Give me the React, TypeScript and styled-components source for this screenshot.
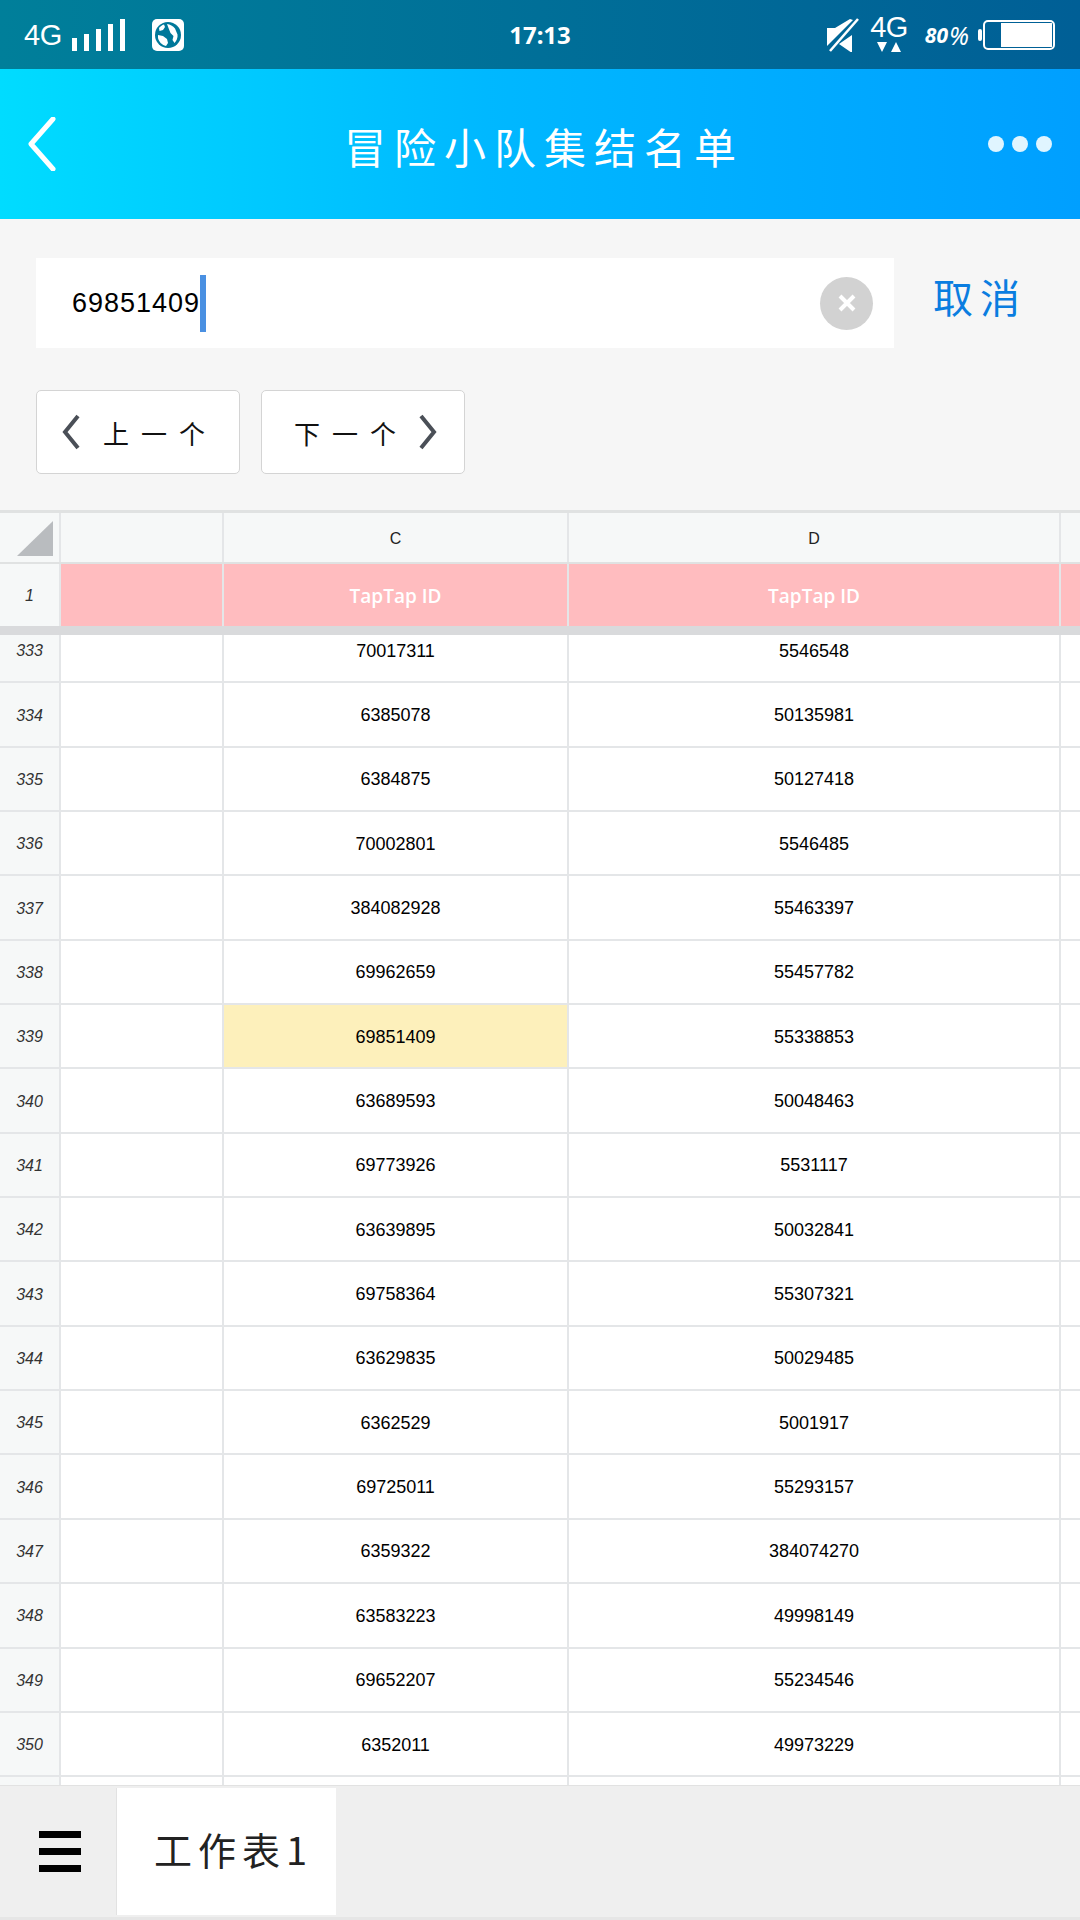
import styled, { createGlobalStyle } from "styled-components";

const GlobalStyle = createGlobalStyle`
    html, body {
        margin: 0;
        padding: 0;
        background: #ffffff;
    }
    * {
        box-sizing: border-box;
    }
`;

const rows = [
    ["333", "70017311", "5546548"],
    ["334", "6385078", "50135981"],
    ["335", "6384875", "50127418"],
    ["336", "70002801", "5546485"],
    ["337", "384082928", "55463397"],
    ["338", "69962659", "55457782"],
    ["339", "69851409", "55338853"],
    ["340", "63689593", "50048463"],
    ["341", "69773926", "5531117"],
    ["342", "63639895", "50032841"],
    ["343", "69758364", "55307321"],
    ["344", "63629835", "50029485"],
    ["345", "6362529", "5001917"],
    ["346", "69725011", "55293157"],
    ["347", "6359322", "384074270"],
    ["348", "63583223", "49998149"],
    ["349", "69652207", "55234546"],
    ["350", "6352011", "49973229"],
    ["", "", ""],
];

const Page = styled.div`
    width: 1080px;
    height: 1920px;
    display: flex;
    flex-direction: column;
    overflow: hidden;
    font-family: "Liberation Sans", "Noto Sans CJK SC", sans-serif;
`;

const StatusBar = styled.div`
    height: 69px;
    flex: none;
    padding: 0 24px;
    display: grid;
    grid-template-columns: 1fr auto 1fr;
    align-items: center;
    color: #ffffff;
    background: linear-gradient(90deg, #007f9a 0%, #006f98 50%, #005f96 100%);
`;

const StatusGroup = styled.div<{ $right?: boolean }>`
    display: flex;
    align-items: center;
    justify-content: ${(p) => (p.$right ? "flex-end" : "flex-start")};
`;

const NetLabel = styled.span`
    font-size: 29px;
    line-height: 24px;
    letter-spacing: -0.5px;
`;

const NetStack = styled.div`
    display: flex;
    flex-direction: column;
    align-items: center;
    gap: 3px;
    margin: -2px 17px 0 11px;
`;

const Clock = styled.span`
    font-family: "Noto Sans", sans-serif;
    font-size: 24px;
    font-weight: 700;
`;

const Percent = styled.span`
    font-family: "Noto Sans", sans-serif;
    font-size: 21px;
    font-weight: 700;
    font-style: italic;
    margin-right: 9px;
    display: flex;
    align-items: center;
`;

const PercentSign = styled.span`
    font-size: 25px;
    font-weight: 400;
    margin-left: 1px;
`;

const NavBar = styled.div`
    height: 150px;
    flex: none;
    padding: 0 28px;
    display: grid;
    grid-template-columns: 1fr auto 1fr;
    align-items: center;
    color: #ffffff;
    background: linear-gradient(90deg, #00dcff 0%, #00b8ff 45%, #009fff 100%);
`;

const Title = styled.h1`
    margin: 4px -8px 0 0;
    font-family: "Noto Sans CJK SC", sans-serif;
    font-size: 42px;
    font-weight: 400;
    letter-spacing: 8px;
    line-height: 50px;
`;

const Dots = styled.div`
    display: flex;
    justify-content: flex-end;
    gap: 8px;
`;

const Dot = styled.span`
    width: 16px;
    height: 16px;
    border-radius: 50%;
    background: #e0f5ff;
`;

const SearchArea = styled.div`
    height: 291px;
    flex: none;
    padding: 39px 36px 0;
    background: #f6f6f6;
`;

const SearchRow = styled.div`
    display: flex;
    align-items: center;
`;

const SearchBox = styled.div`
    width: 858px;
    height: 90px;
    padding: 0 21px 0 36px;
    display: flex;
    align-items: center;
    background: #ffffff;
`;

const SearchText = styled.span`
    font-size: 27px;
    letter-spacing: 1px;
    color: #000000;
`;

const Caret = styled.span`
    width: 6px;
    height: 57px;
    background: #4a90e2;
`;

const ClearButton = styled.div`
    width: 53px;
    height: 53px;
    margin-left: auto;
    border-radius: 50%;
    background: #d2d2d2;
    display: flex;
    align-items: center;
    justify-content: center;
`;

const CancelLabel = styled.span`
    margin: 0 0 14px 39px;
    font-family: "Noto Sans CJK SC", sans-serif;
    font-size: 40px;
    letter-spacing: 7px;
    line-height: 48px;
    color: #0a7de0;
`;

const StepRow = styled.div`
    display: flex;
    gap: 21px;
    margin-top: 42px;
`;

const StepButton = styled.div<{ $next?: boolean }>`
    width: 204px;
    height: 84px;
    padding: ${(p) => (p.$next ? "0 27px 0 32px" : "0 34px 0 25px")};
    display: flex;
    align-items: center;
    justify-content: space-between;
    background: #ffffff;
    border: 1px solid #d4d4d4;
    border-radius: 5px;
    font-family: "Noto Sans CJK SC", sans-serif;
    font-size: 26px;
    color: #111111;
`;

const StepLabel = styled.span`
    letter-spacing: 12px;
    margin-right: -12px;
`;

const Sheet = styled.div`
    flex: 1;
    min-height: 0;
    display: flex;
    flex-direction: column;
    border-top: 3px solid #e0e2e2;
    background: #ffffff;
`;

const Row = styled.div<{ $h: string; $line: string; $lineW: number }>`
    height: ${(p) => p.$h};
    flex: none;
    display: grid;
    grid-template-columns: 61px 163px 345px 492px 19px;
    border-bottom: ${(p) => p.$lineW}px solid ${(p) => p.$line};
`;

const Cell = styled.div<{ $bg?: string; $color?: string }>`
    padding-top: 2px;
    display: flex;
    align-items: center;
    justify-content: center;
    border-right: 2px solid #e4e6e8;
    background: ${(p) => p.$bg || "#ffffff"};
    color: ${(p) => p.$color || "#000000"};
    font-size: 18px;

    &:last-child {
        border-right: 0;
    }
`;

const RowNum = styled(Cell)`
    background: #f6f8f8;
    color: #333333;
    font-size: 16px;
    font-style: italic;
`;

const ColLetter = styled(Cell)`
    background: #f6f8f8;
    color: #222222;
    font-size: 16px;
`;

const HeaderCell = styled(Cell)`
    background: #ffbcbf;
    color: #ffffff;
    font-family: "Open Sans", sans-serif;
    font-size: 19px;
    font-weight: 600;
`;

const Corner = styled(RowNum)`
    padding: 8px 6px 6px 17px;
`;

const Viewport = styled.div`
    flex: 1;
    min-height: 0;
    overflow: hidden;
`;

const Scrolled = styled.div`
    margin-top: -16px;
`;

const Toolbar = styled.div`
    height: 135px;
    flex: none;
    display: flex;
    align-items: flex-start;
    padding-top: 2px;
    background: #efefef;
    border-top: 1px solid #e2e2e2;
    border-bottom: 3px solid #e6e6e6;
`;

const MenuButton = styled.div`
    width: 116px;
    height: 127px;
    padding-left: 39px;
    display: flex;
    flex-direction: column;
    justify-content: center;
    gap: 10px;
`;

const MenuBar = styled.span`
    width: 42px;
    height: 7px;
    background: #000000;
`;

const Tab = styled.div`
    width: 220px;
    height: 127px;
    padding: 0 0 6px 37px;
    display: flex;
    align-items: center;
    background: #ffffff;
    border-left: 1px solid #e2e2e2;
    font-family: "Noto Sans CJK SC", sans-serif;
    font-size: 38px;
    letter-spacing: 6px;
    color: #222222;
`;

const App = () => {
    return (
        <Page>
            <GlobalStyle />

            <StatusBar>
                <StatusGroup>
                    <NetLabel>4G</NetLabel>
                    <svg width="56" height="34" viewBox="0 0 56 34" style={{ marginLeft: 7 }}>
                        <g fill="#ffffff">
                            <rect x="3" y="20" width="5" height="13" />
                            <rect x="15" y="16" width="5" height="17" />
                            <rect x="27" y="11" width="5" height="22" />
                            <rect x="39" y="6" width="5" height="27" />
                            <rect x="51" y="1" width="5" height="32" />
                        </g>
                    </svg>
                    <svg width="32" height="32" viewBox="0 0 32 32" style={{ marginLeft: 27 }}>
                        <rect width="32" height="32" rx="5" fill="#ffffff" />
                        <circle cx="16" cy="16" r="13" fill="#00789a" />
                        <path
                            d="M7 9c1-1.500 3-3 5-3.500l1 2.500-2 3-3.500 1zM15 5c3 .5 6 2 8 4.500l2.500 6c.5 3-1 6.500-3 8.500l-2-3 1-4-3-3-2-5zM6 16l5 1 4 3 1 4-2 3c-4-1-7-4-8-8z"
                            fill="#ffffff"
                        />
                    </svg>
                </StatusGroup>

                <Clock>17:13</Clock>

                <StatusGroup $right>
                    <svg width="33" height="34" viewBox="0 0 33 34">
                        <path d="M1 10h8L24 1l3 1L1 28zM26 17v18L13 26z" fill="#ffffff" />
                        <path d="M4 33 32 1" stroke="#ffffff" strokeWidth="2.5" />
                    </svg>
                    <NetStack>
                        <NetLabel>4G</NetLabel>
                        <svg width="26" height="11" viewBox="0 0 26 11">
                            <path d="M1 0h10l-5 10zM15 10h10l-5-10z" fill="#ffffff" />
                        </svg>
                    </NetStack>
                    <Percent>
                        80<PercentSign>%</PercentSign>
                    </Percent>
                    <svg width="78" height="30" viewBox="0 0 78 30">
                        <rect x="0" y="9" width="4" height="12" rx="2" fill="#ffffff" />
                        <rect x="6" y="1" width="70" height="28" rx="4" fill="none" stroke="#ffffff" strokeWidth="2" />
                        <rect x="23" y="3" width="51" height="24" fill="#ffffff" />
                    </svg>
                </StatusGroup>
            </StatusBar>

            <NavBar>
                <svg width="28" height="54" viewBox="0 0 28 54">
                    <path d="M25 2 3 27l22 25" fill="none" stroke="#ffffff" strokeWidth="5" strokeLinecap="round" strokeLinejoin="round" />
                </svg>
                <Title>冒险小队集结名单</Title>
                <Dots>
                    <Dot />
                    <Dot />
                    <Dot />
                </Dots>
            </NavBar>

            <SearchArea>
                <SearchRow>
                    <SearchBox>
                        <SearchText>69851409</SearchText>
                        <Caret />
                        <ClearButton>
                            <svg width="20" height="20" viewBox="0 0 20 20">
                                <path d="M3 3l14 14M17 3 3 17" stroke="#ffffff" strokeWidth="4" />
                            </svg>
                        </ClearButton>
                    </SearchBox>
                    <CancelLabel>取消</CancelLabel>
                </SearchRow>

                <StepRow>
                    <StepButton>
                        <svg width="18" height="36" viewBox="0 0 18 36">
                            <path d="M16 2 3 18l13 16" fill="none" stroke="#4a4f57" strokeWidth="4" />
                        </svg>
                        <StepLabel>上一个</StepLabel>
                    </StepButton>
                    <StepButton $next>
                        <StepLabel>下一个</StepLabel>
                        <svg width="18" height="36" viewBox="0 0 18 36">
                            <path d="M2 2l13 16L2 34" fill="none" stroke="#4a4f57" strokeWidth="4" />
                        </svg>
                    </StepButton>
                </StepRow>
            </SearchArea>

            <Sheet>
                <Row $h="51px" $line="#e0e2e2" $lineW={2}>
                    <Corner>
                        <svg width="36" height="35" viewBox="0 0 36 35">
                            <path d="M36 0v35H0z" fill="#b9bcbf" />
                        </svg>
                    </Corner>
                    <ColLetter />
                    <ColLetter>C</ColLetter>
                    <ColLetter>D</ColLetter>
                    <ColLetter />
                </Row>
                <Row $h="71px" $line="#d9dadc" $lineW={9}>
                    <RowNum>1</RowNum>
                    <HeaderCell />
                    <HeaderCell>TapTap ID</HeaderCell>
                    <HeaderCell>TapTap ID</HeaderCell>
                    <HeaderCell />
                </Row>

                <Viewport>
                    <Scrolled>
                        {rows.map((row, idx) => {
                            return (
                                <Row key={idx} $h="64.35px" $line="#e4e6e8" $lineW={2}>
                                    <RowNum>{row[0]}</RowNum>
                                    <Cell />
                                    <Cell $bg={row[1] === "69851409" ? "#fdf0bb" : undefined}>{row[1]}</Cell>
                                    <Cell>{row[2]}</Cell>
                                    <Cell />
                                </Row>
                            );
                        })}
                    </Scrolled>
                </Viewport>
            </Sheet>

            <Toolbar>
                <MenuButton>
                    <MenuBar />
                    <MenuBar />
                    <MenuBar />
                </MenuButton>
                <Tab>工作表1</Tab>
            </Toolbar>
        </Page>
    );
};

export default App;
